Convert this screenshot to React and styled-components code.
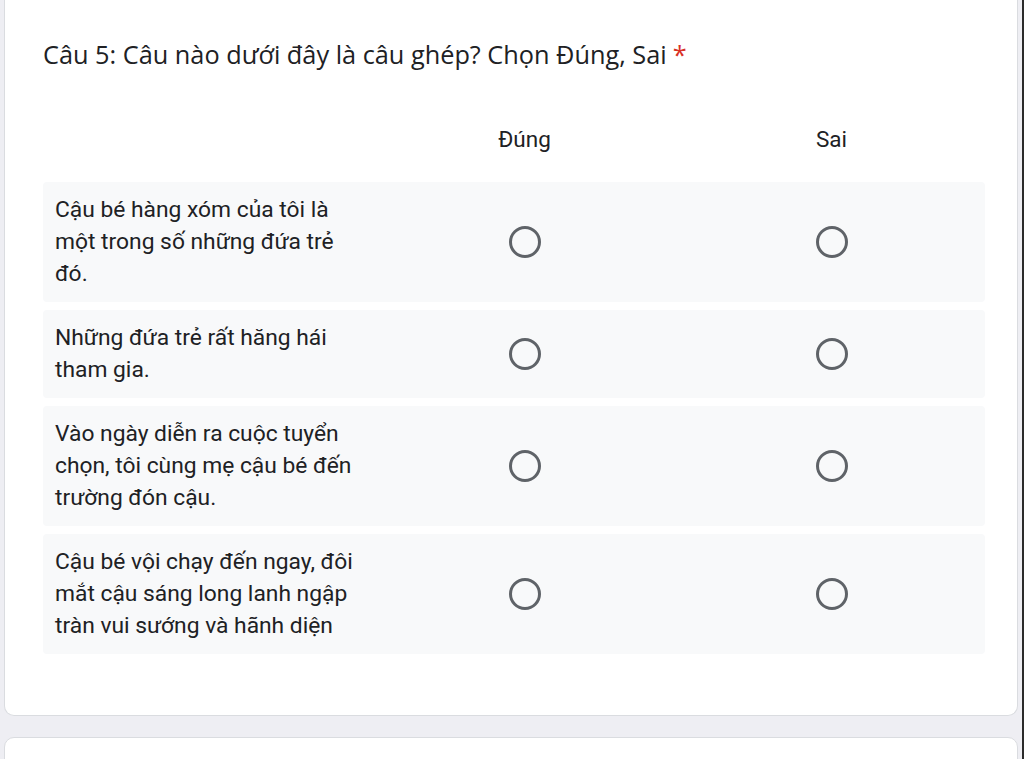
import React from "react";
import styled, { createGlobalStyle } from "styled-components";

const GlobalStyle = createGlobalStyle`
  html, body {
    margin: 0;
    padding: 0;
    background: #eeeef3;
  }
`;

const Page = styled.div`
  width: 1024px;
  height: 759px;
  box-sizing: border-box;
  padding: 0 4px 0 4px;
  border-right: 2px solid #2b2b2b;
  overflow: hidden;
  display: flex;
  flex-direction: column;
  gap: 21px;
`;

const Card = styled.div`
  background: #fff;
  border: 1px solid #dadce0;
  border-top: none;
  border-radius: 0 0 10px 10px;
  box-sizing: border-box;
  height: ${(props) => props.height || "auto"};
  padding: 36px 32px 0 38px;
  flex-shrink: 0;
`;

const NextCard = styled.div`
  background: #fff;
  border: 1px solid #dadce0;
  border-radius: 10px;
  height: 60px;
  flex-shrink: 0;
`;

const Title = styled.div`
  font-family: "Open Sans", sans-serif;
  font-size: 25.3px;
  color: #202124;
  line-height: 36px;
`;

const Star = styled.span`
  color: #d93025;
  margin-left: 6px;
`;

const Grid = styled.div`
  margin-top: 47px;
  display: flex;
  flex-direction: column;
  gap: 8px;
`;

const HeaderRow = styled.div`
  display: grid;
  grid-template-columns: 328px 307px 307px;
  height: 40px;
  align-items: center;
  margin-bottom: 15px;
`;

const ColLabel = styled.div`
  font-family: Roboto, sans-serif;
  font-size: 22.5px;
  color: #202124;
  text-align: center;
`;

const Row = styled.div`
  display: grid;
  grid-template-columns: 328px 307px 307px;
  align-items: center;
  background: #f8f9fa;
  border-radius: 4px;
  padding: 12px 0;
`;

const RowLabel = styled.div`
  font-family: Roboto, sans-serif;
  font-size: 22.8px;
  line-height: 32px;
  color: #202124;
  padding: 0 10px 0 12px;
`;

const Cell = styled.div`
  display: flex;
  justify-content: center;
`;

const Radio = styled.div`
  width: 26px;
  height: 26px;
  border: 3px solid #5f6368;
  border-radius: 50%;
`;

const rows = [
  "Cậu bé hàng xóm của tôi là một trong số những đứa trẻ đó.",
  "Những đứa trẻ rất hăng hái tham gia.",
  "Vào ngày diễn ra cuộc tuyển chọn, tôi cùng mẹ cậu bé đến trường đón cậu.",
  "Cậu bé vội chạy đến ngay, đôi mắt cậu sáng long lanh ngập tràn vui sướng và hãnh diện",
];

export default function App() {
  return (
    <>
      <GlobalStyle />
      <Page>
        <Card height="716px">
          <Title>
            Câu 5: Câu nào dưới đây là câu ghép? Chọn Đúng, Sai<Star>*</Star>
          </Title>
          <Grid>
            <HeaderRow>
              <div />
              <ColLabel>Đúng</ColLabel>
              <ColLabel>Sai</ColLabel>
            </HeaderRow>
            {rows.map((text) => (
              <Row key={text}>
                <RowLabel>{text}</RowLabel>
                <Cell>
                  <Radio />
                </Cell>
                <Cell>
                  <Radio />
                </Cell>
              </Row>
            ))}
          </Grid>
        </Card>
        <NextCard />
      </Page>
    </>
  );
}
